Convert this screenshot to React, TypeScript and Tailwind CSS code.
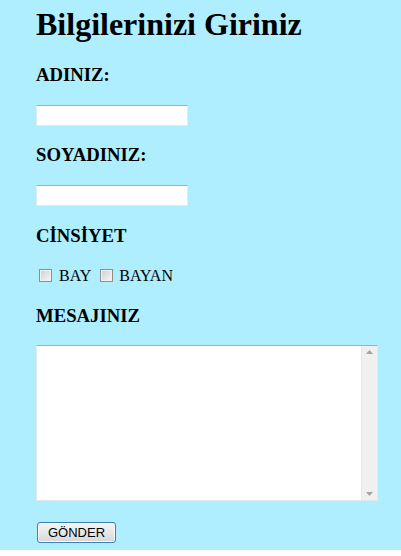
import React from 'react';

const serif = { fontFamily: '"Liberation Serif", "Times New Roman", serif' };

const Checkbox: React.FC = () => (
    <span className="inline-block w-[13px] h-[13px] mt-[3px] border border-[#8e8f8f] bg-gradient-to-br from-[#cfcfcf] to-[#f7f7f7] shadow-[inset_0_0_0_1px_#f0f0f0]" />
);

const TextBox: React.FC = () => (
    <div className="w-[152px] h-[21px] bg-white border border-[#e3e9ef] border-t-[#abadb3]" />
);

const App: React.FC = () => {
    return (
        <div className="bg-[#aeeeff] pl-[36px] pt-[4px] pb-[6px] text-black" style={serif}>
            <h1 className="text-[32px] leading-[40px] font-bold">Bilgilerinizi Giriniz</h1>

            <h3 className="mt-[20px] text-[18.72px] leading-[22px] font-bold">ADINIZ:</h3>
            <div className="mt-[19px]"><TextBox /></div>

            <h3 className="mt-[18px] text-[18.72px] leading-[22px] font-bold">SOYADINIZ:</h3>
            <div className="mt-[19px]"><TextBox /></div>

            <h3 className="mt-[19px] text-[18.72px] leading-[22px] font-bold">CİNSİYET</h3>
            <div className="mt-[19px] flex items-start text-[16px] leading-[20px]">
                <span className="ml-[3px]"><Checkbox /></span>
                <span className="ml-[7px]">BAY</span>
                <span className="ml-[9px]"><Checkbox /></span>
                <span className="ml-[6px]">BAYAN</span>
            </div>

            <h3 className="mt-[18px] text-[18.72px] leading-[22px] font-bold">MESAJINIZ</h3>
            <div className="mt-[18px] w-[342px] h-[156px] flex bg-white border border-[#e3e9ef] border-t-[#abadb3]">
                <div className="flex-1" />
                <div className="w-[16px] bg-[#f0f0f0] border-l border-[#e8e8e8] flex flex-col justify-between items-center py-[4px]">
                    <svg width="7" height="4" viewBox="0 0 7 4"><path d="M3.5 0 L7 4 L0 4 Z" fill="#a3a3a3" /></svg>
                    <svg width="7" height="4" viewBox="0 0 7 4"><path d="M0 0 L7 0 L3.5 4 Z" fill="#a3a3a3" /></svg>
                </div>
            </div>

            <button
                className="mt-[21px] ml-px w-[79px] h-[21px] rounded-[3px] border border-[#3c7fb1] bg-gradient-to-b from-[#f4f4f4] via-[#e8e8e8] to-[#d6d6d6] shadow-[inset_0_0_0_1px_#fafafa] text-[13px] leading-[19px] text-black"
                style={{ fontFamily: '"Liberation Sans", Arial, sans-serif' }}
            >
                GÖNDER
            </button>
        </div>
    );
};

export default App;
